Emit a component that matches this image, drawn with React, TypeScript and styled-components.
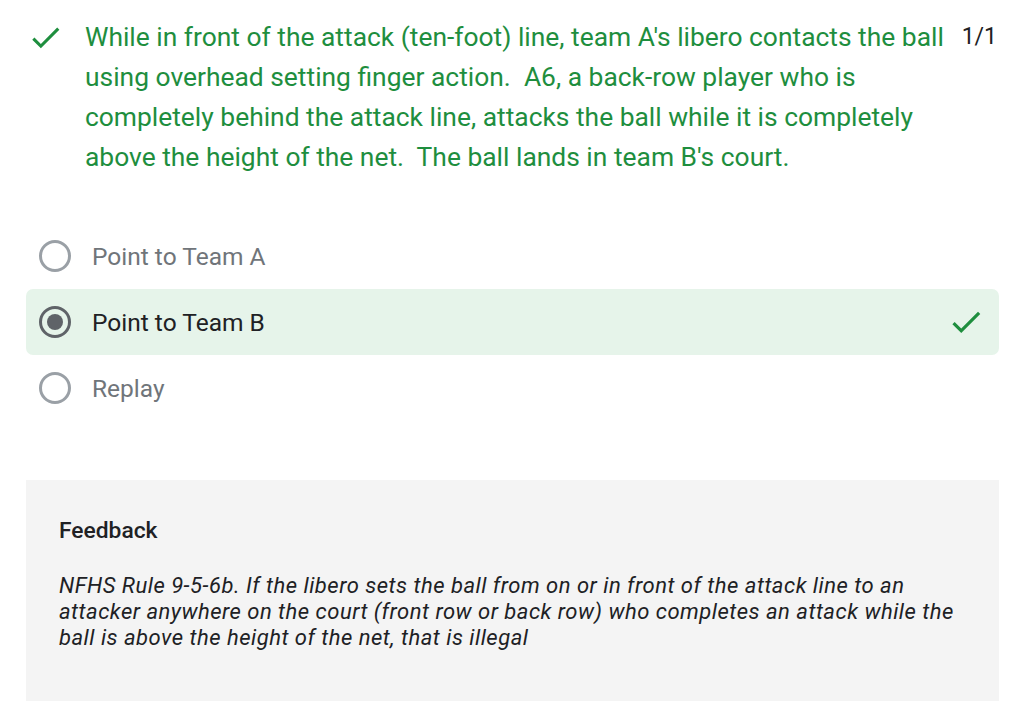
import React from "react";
import styled, { createGlobalStyle } from "styled-components";

const Global = createGlobalStyle`
  html, body { margin: 0; padding: 0; background: #ffffff; }
  body { font-family: Roboto, "Noto Sans", Arial, sans-serif; }
`;

const Page = styled.div`
  width: 1023px;
  box-sizing: border-box;
  padding: 17px 24px 0 26px;
  display: flex;
  flex-direction: column;
`;

const QuestionRow = styled.div`
  display: flex;
  align-items: flex-start;
`;

const CheckWrap = styled.div`
  width: 59px;
  flex: none;
  display: flex;
  padding-top: 2px;
  padding-left: 1px;
  box-sizing: border-box;
`;

const QuestionText = styled.div`
  flex: 1;
  color: #1e8e3e;
  font-size: 26.4px;
  line-height: 40px;
`;

const Score = styled.div`
  flex: none;
  color: #202124;
  font-size: 23px;
  line-height: 40px;
  padding-left: 14px;
  padding-right: 2px;
`;

const Options = styled.div`
  display: flex;
  flex-direction: column;
  margin-top: 46px;
`;

const Option = styled.div<{ $selected?: boolean }>`
  display: flex;
  align-items: center;
  height: 66px;
  padding: 0 14px 0 13px;
  border-radius: 7px;
  background: ${(p) => (p.$selected ? "#e6f4ea" : "transparent")};
  color: ${(p) => (p.$selected ? "#202124" : "#70757a")};
  font-size: 24.5px;
`;

const Radio = styled.span<{ $selected?: boolean }>`
  width: 32px;
  height: 32px;
  box-sizing: border-box;
  border-radius: 50%;
  border: 3px solid ${(p) => (p.$selected ? "#5f6368" : "#9aa0a6")};
  display: flex;
  align-items: center;
  justify-content: center;
  flex: none;
  margin-right: 21px;
  &::after {
    content: "";
    display: ${(p) => (p.$selected ? "block" : "none")};
    width: 16px;
    height: 16px;
    border-radius: 50%;
    background: #5f6368;
  }
`;

const Label = styled.span`
  flex: 1;
`;

const Feedback = styled.div`
  margin-top: 59px;
  background: #f4f4f4;
  height: 221px;
  box-sizing: border-box;
  padding: 36px 33px 0 33px;
`;

const FeedbackTitle = styled.div`
  font-weight: 500;
  color: #202124;
  font-size: 22.8px;
  line-height: 30px;
`;

const FeedbackBody = styled.div`
  margin-top: 27px;
  font-style: italic;
  color: #202124;
  font-size: 22px;
  letter-spacing: 0.5px;
  line-height: 26px;
`;

const Check = ({ size }: { size: number }) => (
  <svg width={size} height={size} viewBox="0 0 24 24">
    <path
      d="M9 16.17L4.83 12l-1.42 1.41L9 19 21 7l-1.41-1.41z"
      fill="#1e8e3e"
    />
  </svg>
);

const options = [
  { label: "Point to Team A", selected: false },
  { label: "Point to Team B", selected: true },
  { label: "Replay", selected: false },
];

export default function App() {
  return (
    <>
      <Global />
      <Page>
        <QuestionRow>
          <CheckWrap>
            <Check size={37} />
          </CheckWrap>
          <QuestionText>
            While in front of the attack (ten-foot) line, team A's libero contacts the ball
            using overhead setting finger action.&nbsp; A6, a back-row player who is
            completely behind the attack line, attacks the ball while it is completely
            above the height of the net.&nbsp; The ball lands in team B's court.
          </QuestionText>
          <Score>1/1</Score>
        </QuestionRow>
        <Options>
          {options.map((o) => (
            <Option key={o.label} $selected={o.selected}>
              <Radio $selected={o.selected} />
              <Label>{o.label}</Label>
              {o.selected && <Check size={38} />}
            </Option>
          ))}
        </Options>
        <Feedback>
          <FeedbackTitle>Feedback</FeedbackTitle>
          <FeedbackBody>
            NFHS Rule 9-5-6b. If the libero sets the ball from on or in front of the attack line to an
            attacker anywhere on the court (front row or back row) who completes an attack while the
            ball is above the height of the net, that is illegal
          </FeedbackBody>
        </Feedback>
      </Page>
    </>
  );
}
